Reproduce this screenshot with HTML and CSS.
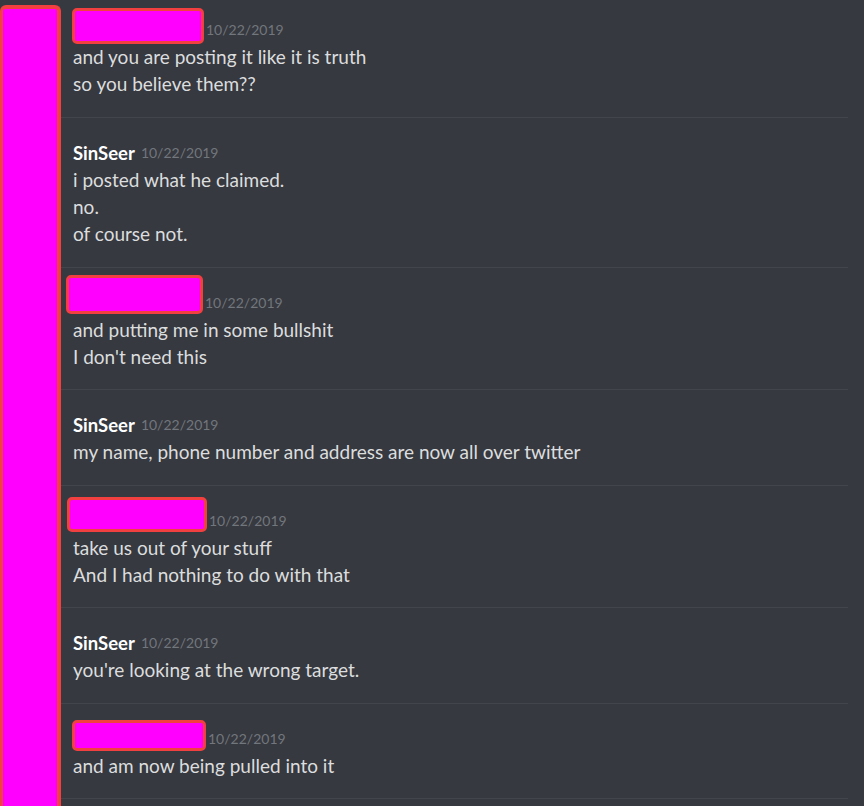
FILE: index.html
```html
<!DOCTYPE html>
<html lang="en">
<head>
    <meta charset="UTF-8">
    <meta name="viewport" content="width=device-width, initial-scale=1.0">
    <title>Chat log</title>
    <link rel="stylesheet" href="styles.css">
</head>
<body>
    <div class="page">
        <div class="avatar-strip"></div>

        <div class="messages">
            <div class="group first">
                <div class="header">
                    <span class="redact r1"></span>
                    <span class="time">10/22/2019</span>
                </div>
                <div class="line">and you are posting it like it is truth</div>
                <div class="line">so you believe them??</div>
            </div>

            <div class="group">
                <div class="header">
                    <span class="name">SinSeer</span>
                    <span class="time">10/22/2019</span>
                </div>
                <div class="line">i posted what he claimed.</div>
                <div class="line">no.</div>
                <div class="line">of course not.</div>
            </div>

            <div class="group">
                <div class="header">
                    <span class="redact r2"></span>
                    <span class="time">10/22/2019</span>
                </div>
                <div class="line">and putting me in some bullshit</div>
                <div class="line">I don't need this</div>
            </div>

            <div class="group">
                <div class="header">
                    <span class="name">SinSeer</span>
                    <span class="time">10/22/2019</span>
                </div>
                <div class="line">my name, phone number and address are now all over twitter</div>
            </div>

            <div class="group">
                <div class="header">
                    <span class="redact r3"></span>
                    <span class="time">10/22/2019</span>
                </div>
                <div class="line">take us out of your stuff</div>
                <div class="line">And I had nothing to do with that</div>
            </div>

            <div class="group">
                <div class="header">
                    <span class="name">SinSeer</span>
                    <span class="time">10/22/2019</span>
                </div>
                <div class="line">you're looking at the wrong target.</div>
            </div>

            <div class="group">
                <div class="header">
                    <span class="redact r4"></span>
                    <span class="time">10/22/2019</span>
                </div>
                <div class="line">and am now being pulled into it</div>
            </div>
        </div>
    </div>
</body>
</html>
```

FILE: styles.css
```css
html, body {
    margin: 0;
    padding: 0;
    background: #36393f;
    height: 100%;
    overflow: hidden;
}
body {
    font-family: Lato, "Open Sans", sans-serif;
    color: #dcddde;
}
.page {
    display: flex;
    align-items: stretch;
    min-height: 100%;
}
.avatar-strip {
    width: 54px;
    margin-top: 5px;
    background: #ff00ff;
    border: 4px solid #f23f3f;
    border-left-width: 3px;
    border-bottom: none;
    border-radius: 6px 6px 0 0;
    flex-shrink: 0;
}
.messages {
    flex: 1;
    margin-right: 16px;
}
.group {
    padding: 21px 0 19.5px 12px;
    border-bottom: 1px solid #42454b;
}
.group.first {
    padding-top: 16px;
    padding-bottom: 20px;
}
.header {
    display: flex;
    align-items: center;
    height: 27px;
}
.name {
    color: #ffffff;
    font-weight: 700;
    font-size: 18.5px;
    margin-right: 6px;
}
.time {
    color: #72767d;
    font-size: 14px;
}
.line {
    font-size: 19px;
    line-height: 27px;
    white-space: nowrap;
}
.redact {
    display: inline-block;
    box-sizing: border-box;
    background: #ff00ff;
    border: 3px solid #f23f3f;
    border-radius: 5px;
    margin-right: 2px;
}
.r1 { width: 132px; height: 36px; margin-left: -1px; margin-bottom: 7px; }
.r2 { width: 137px; height: 39px; margin-left: -7px; margin-bottom: 16px; }
.r3 { width: 140px; height: 35px; margin-left: -6px; margin-bottom: 12px; }
.r4 { width: 134px; height: 31px; margin-left: -1px; margin-bottom: 6px; }
```
